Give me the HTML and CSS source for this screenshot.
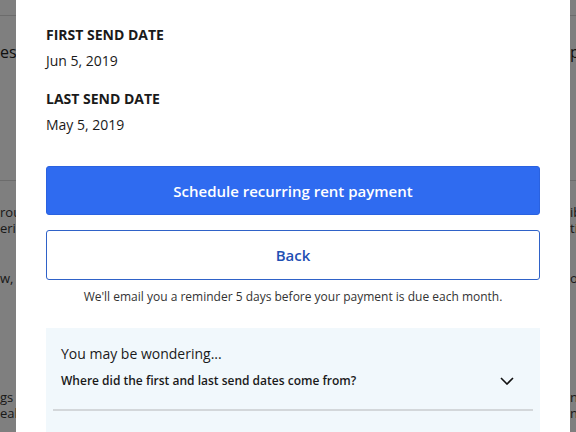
FILE: index.html
```html
<!DOCTYPE html>
<html lang="en">
<head>
<meta charset="utf-8">
<title>Schedule recurring rent payment</title>
<link rel="stylesheet" href="styles.css">
</head>
<body>
<div class="page">
  <div class="page-top"></div>
  <div class="bg-row bg-title"><span class="edge-l">est</span><span class="mid"></span><span class="edge-r">p</span></div>
  <div class="page-rule"></div>
  <div class="bg-row bg-p1"><span class="edge-l">roup</span><span class="mid"></span><span class="edge-r">ib</span></div>
  <div class="bg-row"><span class="edge-l">erie</span><span class="mid"></span><span class="edge-r">ti</span></div>
  <div class="bg-row bg-p2"><span class="edge-l">w, I</span><span class="mid"></span><span class="edge-r">o</span></div>
  <div class="bg-row bg-p3"><span class="edge-l">gs in</span><span class="mid"></span><span class="edge-r">n</span></div>
  <div class="bg-row"><span class="edge-l">eal</span><span class="mid"></span><span class="edge-r">n</span></div>
</div>
<div class="overlay"></div>
<div class="modal">
  <div class="field">
    <div class="field-label">FIRST SEND DATE</div>
    <div class="field-value">Jun 5, 2019</div>
  </div>
  <div class="field field-next">
    <div class="field-label">LAST SEND DATE</div>
    <div class="field-value">May 5, 2019</div>
  </div>
  <div class="actions">
    <button class="btn btn-primary" type="button">Schedule recurring rent payment</button>
    <button class="btn btn-secondary" type="button">Back</button>
  </div>
  <p class="note">We'll email you a reminder 5 days before your payment is due each month.</p>
  <div class="faq">
    <div class="faq-title">You may be wondering...</div>
    <div class="faq-q">
      <span>Where did the first and last send dates come from?</span>
      <svg class="chev" width="14" height="8" viewBox="0 0 14 8" aria-hidden="true"><path d="M1 1 L7 7 L13 1" fill="none" stroke="#111" stroke-width="1.6"/></svg>
    </div>
    <div class="faq-rule"></div>
  </div>
</div>
</body>
</html>
```

FILE: styles.css
```css
* { box-sizing: border-box; }
html, body { margin: 0; padding: 0; }
body {
  width: 576px;
  height: 432px;
  overflow: hidden;
  font-family: "Open Sans", "Liberation Sans", sans-serif;
  color: #1a1a1a;
  background: #ffffff;
  position: relative;
}
.page {
  width: 576px;
  height: 432px;
  background: #ffffff;
  color: #333;
  font-size: 13px;
  line-height: 16px;
}
.page-top { height: 16px; border-bottom: 1px solid #d8d8d8; }
.bg-row {
  display: grid;
  grid-template-columns: 16px 1fr 6px;
  white-space: nowrap;
}
.edge-l { display: flex; justify-content: flex-start; }
.edge-r { display: flex; justify-content: flex-start; }
.bg-title { font-size: 16px; line-height: 24px; margin-top: 24px; color: #222; }
.page-rule { margin-top: 116px; border-top: 1px solid #d8d8d8; }
.bg-p1 { margin-top: 23px; }
.bg-p2 { margin-top: 34px; }
.bg-p3 { margin-top: 103px; }
.overlay {
  position: absolute;
  inset: 0;
  background: rgba(0, 0, 0, 0.5);
}
.modal {
  position: absolute;
  top: 0;
  left: 16px;
  width: 554px;
  height: 432px;
  background: #ffffff;
  padding: 25px 30px 0;
}
.field-label {
  font-size: 14px;
  line-height: 20px;
  font-weight: 700;
  color: #1a1a1a;
}
.field-value {
  margin-top: 6px;
  font-size: 14px;
  line-height: 20px;
  color: #1a1a1a;
}
.field-next { margin-top: 18px; }
.actions {
  margin-top: 31px;
  display: flex;
  flex-direction: column;
  gap: 15px;
}
.btn {
  width: 100%;
  font-family: "Open Sans", "Liberation Sans", sans-serif;
  font-size: 15px;
  font-weight: 600;
  border-radius: 3px;
  cursor: pointer;
}
.btn-primary {
  height: 49px;
  background: #2f6bf0;
  border: 1px solid #2a62e0;
  color: #ffffff;
}
.btn-secondary {
  height: 50px;
  background: #ffffff;
  border: 1px solid #2f62c8;
  color: #1f50b4;
}
.note {
  margin: 8px 0 0;
  text-align: center;
  font-size: 12px;
  line-height: 18px;
  color: #333;
}
.faq {
  margin-top: 22px;
  background: #f1f8fc;
  padding: 15px 15px 40px;
}
.faq-title {
  font-size: 14px;
  line-height: 22px;
  color: #1a1a1a;
}
.faq-q {
  margin-top: 6px;
  display: flex;
  justify-content: space-between;
  align-items: center;
  font-size: 12px;
  line-height: 20px;
  font-weight: 600;
  color: #1a1a1a;
}
.chev { margin-right: 11px; }
.faq-rule {
  margin: 18px -8px 0;
  border-top: 2px solid #d3d7da;
}
```
